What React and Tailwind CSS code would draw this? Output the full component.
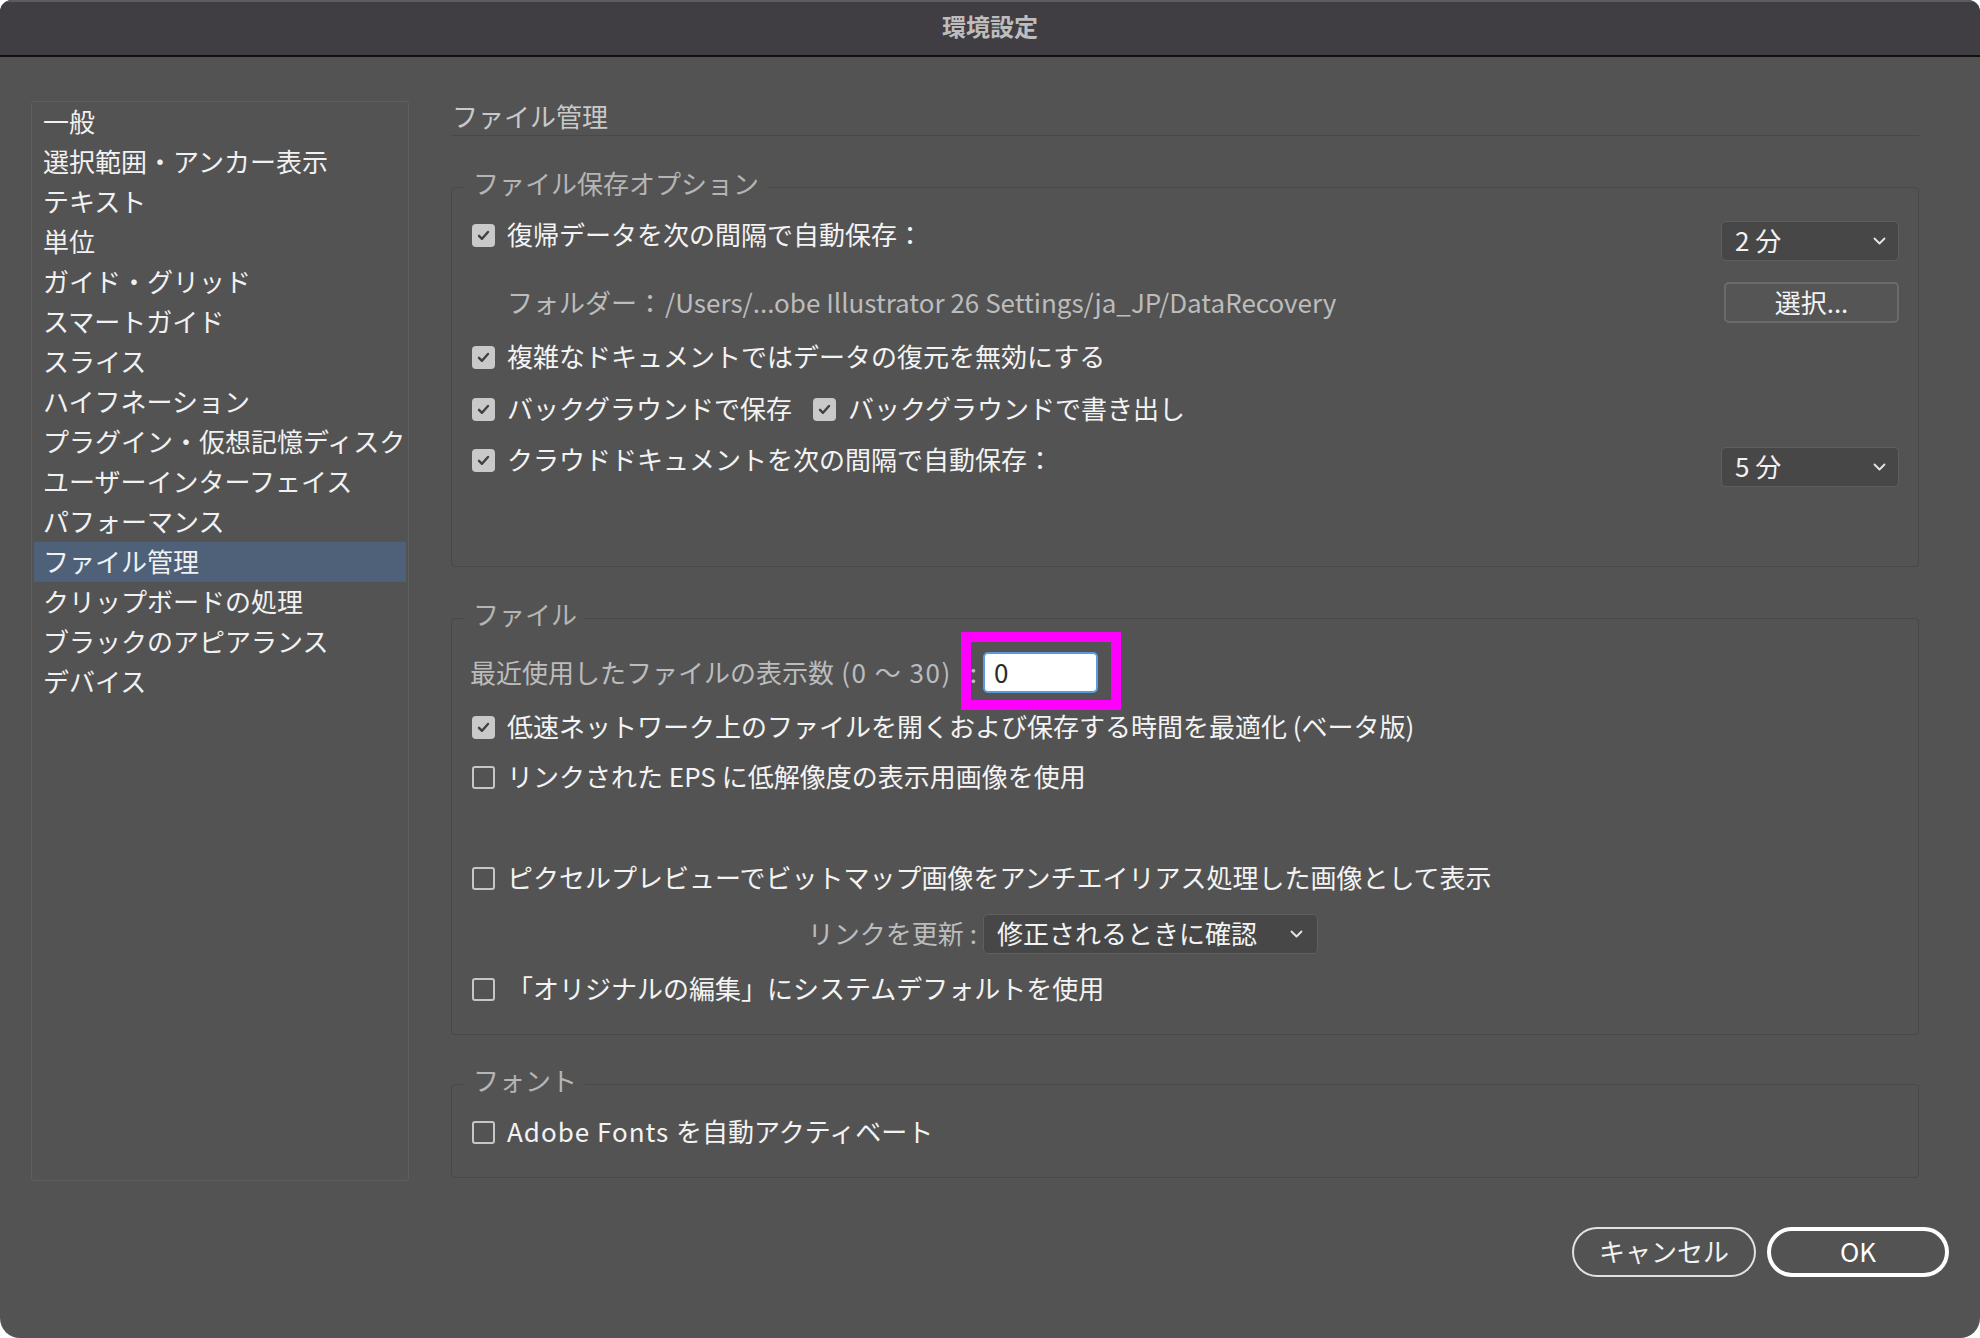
import React from "react";

function Check({ checked }) {
  if (checked) {
    return (
      <span className="w-[23px] h-[23px] rounded-[4px] bg-[#c9c9c9] flex items-center justify-center shrink-0">
        <svg width="15" height="15" viewBox="0 0 15 15">
          <path d="M3 7.8 L6 10.8 L12 4" stroke="#404040" strokeWidth="2.4" fill="none" strokeLinecap="round" strokeLinejoin="round" />
        </svg>
      </span>
    );
  }
  return <span className="w-[23px] h-[23px] rounded-[3px] border-2 border-[#c6c6c6] shrink-0" />;
}

function Chevron() {
  return (
    <svg width="13" height="8" viewBox="0 0 13 8">
      <path d="M1.5 1.5 L6.5 6.5 L11.5 1.5" stroke="#e6e6e6" strokeWidth="1.8" fill="none" strokeLinecap="round" strokeLinejoin="round" />
    </svg>
  );
}

function CheckRow({ checked, children, className = "" }) {
  return (
    <div className={"h-[40px] flex items-center gap-[12px] " + className}>
      <Check checked={checked} />
      <span className="text-[#f3f3f3] whitespace-nowrap leading-[34px] pb-[3px]">{children}</span>
    </div>
  );
}

function Legend({ children }) {
  return (
    <div className="-mt-[20px] ml-[13px] px-[8px] w-fit bg-[#535353] leading-[29px] pb-[5px] text-[#b5b5b5]">{children}</div>
  );
}

function Dropdown({ label, className = "" }) {
  return (
    <div className={"h-[40px] flex items-center justify-between bg-[#474747] border border-[#5f5f5f] rounded-[5px] pl-[13px] text-[#f2f2f2] " + className}>
      <span className="leading-[34px] pb-[3px]">{label}</span>
      <Chevron />
    </div>
  );
}

const sidebarItems = [
  "一般",
  "選択範囲・アンカー表示",
  "テキスト",
  "単位",
  "ガイド・グリッド",
  "スマートガイド",
  "スライス",
  "ハイフネーション",
  "プラグイン・仮想記憶ディスク",
  "ユーザーインターフェイス",
  "パフォーマンス",
  "ファイル管理",
  "クリップボードの処理",
  "ブラックのアピアランス",
  "デバイス",
];

export default function App() {
  return (
    <div className="w-[1980px] h-[1338px] bg-white font-['Noto_Sans_CJK_JP',sans-serif] text-[26px]">
      <div className="w-full h-full flex flex-col rounded-t-[12px] rounded-b-[20px] overflow-hidden bg-[#535353]">
        {/* Title bar */}
        <div className="h-[57px] shrink-0 bg-[#403e43] border-t-2 border-t-[#5d5c61] border-b-2 border-b-[#111111] flex items-center justify-center pb-[6px]">
          <span className="text-[24px] font-bold text-[#bdbdbd] leading-none">環境設定</span>
        </div>

        {/* Body */}
        <div className="flex-1 flex flex-col">
          <div className="flex pt-[44px] pl-[31px] gap-[42px]">
            {/* Sidebar */}
            <div className="w-[378px] h-[1080px] border border-[#5f5f5f] rounded-[3px] shrink-0">
              {sidebarItems.map((item) => (
                <div
                  key={item}
                  className={
                    "mx-[2px] pl-[9px] h-[40px] leading-[37px] text-[#f1f1f1] whitespace-nowrap " +
                    (item === "ファイル管理" ? "bg-[#4e6179]" : "")
                  }
                >
                  {item}
                </div>
              ))}
            </div>

            {/* Right panel */}
            <div className="w-[1468px] shrink-0">
              <div className="h-[35px] border-b border-[#484848] leading-[29px] text-[#c9c9c9] pl-[1px]">ファイル管理</div>

              {/* Group 1 */}
              <div className="mt-[51px] h-[380px] border border-[#484848] rounded-[4px]">
                <Legend>ファイル保存オプション</Legend>
                <div className="mt-[13px] flex justify-between items-start pl-[20px] pr-[19px]">
                  <CheckRow checked>復帰データを次の間隔で自動保存：</CheckRow>
                  <Dropdown label="2 分" className="mt-[6px] w-[178px] pr-[12px]" />
                </div>
                <div className="mt-[21px] h-[41px] flex justify-between items-center pl-[55px] pr-[19px]">
                  <div className="text-[#bcbcbc] whitespace-nowrap leading-[35px] pb-[3px]">
                    フォルダー：<span className="ml-[2px]">/Users/...obe Illustrator 26 Settings/ja_JP/DataRecovery</span>
                  </div>
                  <div className="w-[175px] h-[41px] flex items-center justify-center border-2 border-[#6b6b6b] rounded-[5px] bg-[#555555] text-[#f2f2f2] pb-[3px]">
                    選択...
                  </div>
                </div>
                <CheckRow checked className="mt-[14px] ml-[20px]">複雑なドキュメントではデータの復元を無効にする</CheckRow>
                <div className="mt-[12px] ml-[20px] h-[40px] flex items-center">
                  <CheckRow checked>バックグラウンドで保存</CheckRow>
                  <CheckRow checked className="ml-[21px]">バックグラウンドで書き出し</CheckRow>
                </div>
                <div className="mt-[11px] flex justify-between items-start pl-[20px] pr-[19px]">
                  <CheckRow checked>クラウドドキュメントを次の間隔で自動保存：</CheckRow>
                  <Dropdown label="5 分" className="mt-[7px] w-[178px] pr-[12px]" />
                </div>
              </div>

              {/* Group 2 */}
              <div className="mt-[51px] h-[417px] border border-[#484848] rounded-[4px]">
                <Legend>ファイル</Legend>
                <div className="mt-[19px] h-[41px] flex items-center">
                  <div className="w-[525px] flex justify-end items-center text-[#bcbcbc] whitespace-nowrap leading-[35px] pb-[3px]">
                    <span>最近使用したファイルの表示数<span className="tracking-[1.5px]"> (0 ～ 30)</span></span>
                    <span className="ml-[18px]">:</span>
                  </div>
                  <div className="relative ml-[6px]">
                    <div className="w-[115px] h-[41px] bg-white border-2 border-[#5a9be0] rounded-[5px] pl-[9px] pb-[3px] flex items-center text-[#2a2a2a]">0</div>
                    <div className="absolute -left-[22px] -top-[20px] w-[160px] h-[78px] border-[10px] border-[#ff00ff]" />
                  </div>
                </div>
                <CheckRow checked className="mt-[14px] ml-[20px]">低速ネットワーク上のファイルを開くおよび保存する時間を最適化 (ベータ版)</CheckRow>
                <CheckRow className="mt-[10px] ml-[20px]">リンクされた EPS に低解像度の表示用画像を使用</CheckRow>
                <CheckRow className="mt-[61px] ml-[20px]">ピクセルプレビューでビットマップ画像をアンチエイリアス処理した画像として表示</CheckRow>
                <div className="mt-[16px] h-[40px] flex items-center">
                  <div className="w-[525px] flex justify-end items-center text-[#bcbcbc] whitespace-nowrap leading-[35px] pb-[3px]">
                    <span>リンクを更新</span>
                    <span className="ml-[6px]">:</span>
                  </div>
                  <Dropdown label="修正されるときに確認" className="ml-[6px] w-[335px] pr-[14px]" />
                </div>
                <CheckRow className="mt-[15px] ml-[20px]">「オリジナルの編集」にシステムデフォルトを使用</CheckRow>
              </div>

              {/* Group 3 */}
              <div className="mt-[49px] h-[94px] border border-[#484848] rounded-[4px]">
                <Legend>フォント</Legend>
                <CheckRow className="mt-[13px] ml-[20px]"><span className="tracking-[1px]">Adobe Fonts </span>を自動アクティベート</CheckRow>
              </div>
            </div>
          </div>

          {/* Buttons */}
          <div className="mt-[46px] flex justify-end gap-[11px] pr-[31px]">
            <div className="w-[184px] h-[50px] rounded-full border-2 border-[#e2e2e2] flex items-center justify-center text-[#f2f2f2] pb-[3px]">キャンセル</div>
            <div className="w-[182px] h-[50px] rounded-full border-[4px] border-white flex items-center justify-center text-white pb-[3px]">OK</div>
          </div>
        </div>
      </div>
    </div>
  );
}
